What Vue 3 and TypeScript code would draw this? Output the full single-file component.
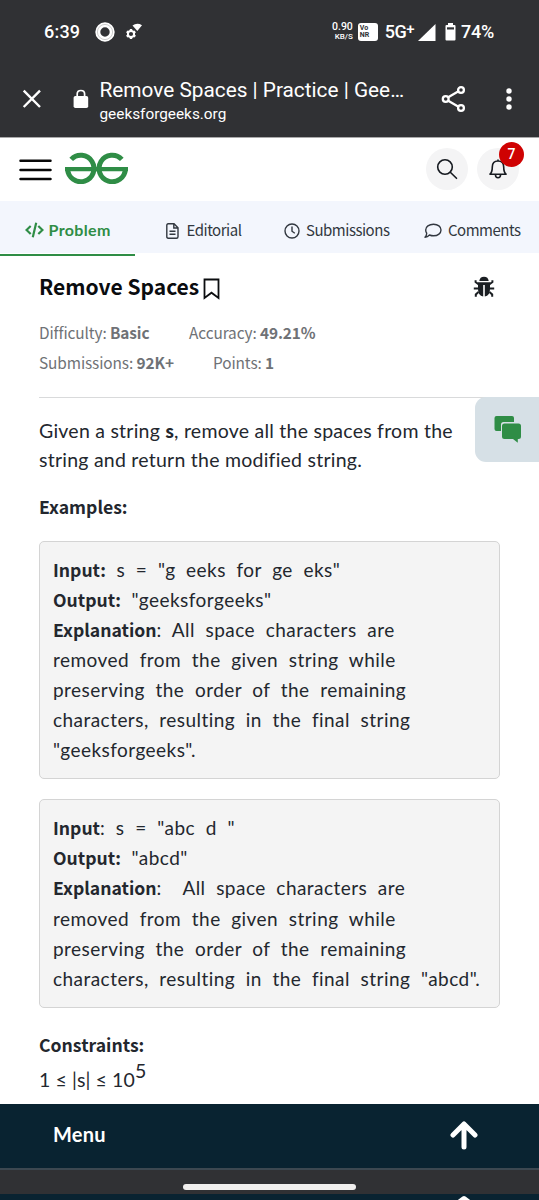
<script setup lang="ts">
interface Example {
  inputColonBold: boolean
  input: string
  output: string
  lead: string
  lines: string[]
}

const examples: Example[] = [
  {
    inputColonBold: true,
    input: 's = "g eeks for ge eks"',
    output: '"geeksforgeeks"',
    lead: ' All space characters are',
    lines: [
      'removed from the given string while',
      'preserving the order of the remaining',
      'characters, resulting in the final string',
      '"geeksforgeeks".',
    ],
  },
  {
    inputColonBold: false,
    input: 's = "abc d "',
    output: '"abcd"',
    lead: '  All space characters are',
    lines: [
      'removed from the given string while',
      'preserving the order of the remaining',
      'characters, resulting in the final string "abcd".',
    ],
  },
]
</script>

<template>
  <div class="screen">
    <header class="chrome">
      <div class="status">
        <span class="time">6:39</span>
        <svg class="ring" width="20" height="20" viewBox="0 0 20 20">
          <circle cx="10" cy="10" r="7.2" fill="none" stroke="#fff" stroke-width="5" />
          <circle cx="10" cy="10" r="7.6" fill="none" stroke="#aaa" stroke-width=".6" />
        </svg>
        <svg class="gear" width="18" height="18" viewBox="0 0 18 18">
          <circle cx="6" cy="11" r="3.1" fill="none" stroke="#fff" stroke-width="2" />
          <g stroke="#fff" stroke-width="2.4">
            <path d="M6 6V8M6 14V16M1.7 8.5L3.4 9.5M8.6 12.5L10.3 13.5M1.7 13.5L3.4 12.5M8.6 9.5L10.3 8.5" />
          </g>
          <path d="M7.5 2.5Q12 -.8 17 2.2L12.3 8Z" fill="#fff" />
        </svg>
        <span class="grow"></span>
        <span class="rate"><span>0.90</span><span class="unit">KB/S</span></span>
        <span class="vonr"><span>Vo</span><span>NR</span></span>
        <span class="net">5G<span class="plus">+</span></span>
        <svg class="signal" width="18" height="17" viewBox="0 0 18 17"><path d="M17.5 0V17H0Z" fill="#fff" /></svg>
        <svg class="battery" width="11" height="18" viewBox="0 0 11 18">
          <path d="M3 0H8V2H9.500Q10.500 2 10.500 3V16.500Q10.500 17.500 9.500 17.500H1.500Q.5 17.500 .5 16.500V3Q.5 2 1.500 2H3Z" fill="#fff" />
          <path d="M2 4.300H9V6.500H2Z" fill="#303134" />
        </svg>
        <span class="pct">74%</span>
      </div>
      <div class="address">
        <svg class="close" width="20" height="20" viewBox="0 0 20 20"><path d="M1.700 1.700L18 18M18 1.700L1.700 18" stroke="#fff" stroke-width="2.400" /></svg>
        <svg class="lock" width="16" height="20" viewBox="0 0 16 20">
          <rect x=".6" y="7" width="14.600" height="12" rx="1.800" fill="#fff" />
          <path d="M4.200 8V5Q4.200 1.500 7.900 1.500T11.600 5V8" fill="none" stroke="#fff" stroke-width="1.700" />
        </svg>
        <div class="page">
          <div class="page-title">Remove Spaces | Practice | Gee…</div>
          <div class="page-host">geeksforgeeks.org</div>
        </div>
        <svg class="share" width="26" height="28" viewBox="0 0 26 28" fill="none" stroke="#fff" stroke-width="2.300">
          <path d="M6.800 12.500L17.500 6.300M6.800 15.500L17.500 21.700" />
          <circle cx="4.700" cy="14" r="2.900" /><circle cx="20" cy="5" r="2.900" /><circle cx="20" cy="23" r="2.900" />
        </svg>
        <svg class="dots" width="6" height="24" viewBox="0 0 6 24" fill="#fff"><circle cx="3" cy="4" r="2.700" /><circle cx="3" cy="12" r="2.700" /><circle cx="3" cy="20" r="2.700" /></svg>
      </div>
    </header>

    <nav class="topbar">
      <svg class="burger" width="34" height="24" viewBox="0 0 34 24"><path d="M1.500 2.700H31.500M1.500 12H31.500M1.500 20.900H31.500" stroke="#080808" stroke-width="2.500" stroke-linecap="round" /></svg>
      <svg class="logo" width="63" height="32" viewBox="0 0 63 32" fill="none" stroke="#2f8d46">
        <path d="M6.200 7.400A13.200 13.200 0 1 1 2.600 17M56.800 7.400A13.200 13.200 0 1 0 60.400 17" stroke-width="5" />
        <path d="M0 17.100H63" stroke-width="4.400" />
      </svg>
      <span class="grow"></span>
      <span class="round">
        <svg width="22" height="22" viewBox="0 0 22 22" fill="none" stroke="#161a20" stroke-width="1.600"><circle cx="9" cy="9" r="7.300" /><path d="M14.300 14.300L20.500 20.300" stroke-linecap="round" /></svg>
      </span>
      <span class="round bell">
        <svg width="18" height="22" viewBox="0 0 18 22" fill="none" stroke="#161a20" stroke-width="1.600" stroke-linejoin="round">
          <path d="M1 16.200C3 14.500 3.300 13 3.300 9C3.300 5 5.500 3 9 3S14.700 5 14.700 9C14.700 13 15 14.500 17 16.200ZM9 3V1.500M6.400 16.500Q6.500 19.800 9 19.800T11.600 16.500" />
        </svg>
        <span class="badge">7</span>
      </span>
    </nav>

    <div class="tabs">
      <div class="tab active">
        <svg width="19" height="16" viewBox="0 0 19 16" fill="none" stroke="#2f8d46" stroke-width="2.200"><path d="M5.700 4L1.500 8L5.700 12M13.300 4L17.500 8L13.300 12M11.200 .8L7.800 15.200" /></svg>
        <span>Problem</span>
      </div>
      <div class="tab editorial">
        <svg width="13" height="16" viewBox="0 0 13 16" fill="none" stroke="#323840" stroke-width="1.400"><path d="M2.200 .8H8L12 4.800V13.700Q12 15.200 10.500 15.200H2.200Q.8 15.200 .8 13.700V2.300Q.8 .8 2.200 .8ZM7.800 .8V5H12M3.500 8.200H9.500M3.500 11.300H9.500" /></svg>
        <span>Editorial</span>
      </div>
      <div class="tab submissions">
        <svg width="16" height="16" viewBox="0 0 16 16" fill="none" stroke="#323840" stroke-width="1.400"><circle cx="8" cy="8" r="7" /><path d="M8 3.500V8.200L10.800 10.300" /></svg>
        <span>Submissions</span>
      </div>
      <div class="tab comments">
        <svg width="18" height="16" viewBox="0 0 18 16" fill="none" stroke="#323840" stroke-width="1.400" stroke-linejoin="round"><path d="M9.500 1.200C14 1.200 17 3.800 17 7S14 12.800 9.500 12.800Q7.500 12.800 5.500 12Q3.500 14.200 1 14.300Q2.700 12.500 2.700 10.200Q1.700 8.800 1.700 7C1.700 3.800 5 1.200 9.500 1.200Z" /></svg>
        <span>Comments</span>
      </div>
    </div>

    <main class="content">
      <div class="title-row">
        <h1>Remove Spaces</h1>
        <svg class="bookmark" width="17" height="22" viewBox="0 0 17 22"><path d="M1.500 1.500H15.500V20L8.500 14.700L1.500 20Z" fill="none" stroke="#0b0d0f" stroke-width="1.800" /></svg>
        <span class="grow"></span>
        <svg class="bug" width="22" height="22" viewBox="0 0 22 22">
          <path d="M6.300 5.100Q6.800 .7 11 .7T15.700 5.100Z" fill="#1b1f23" />
          <path d="M5 6.300H17V13Q17 19.800 11.800 20.500V9H10.200V20.500Q5 19.800 5 13Z" fill="#1b1f23" />
          <path d="M5.500 8.300L2.600 6V4.300M5 12.500H.8M5.500 16L2.800 18.500V20.800M16.500 8.300L19.400 6V4.300M17 12.500H21.200M16.500 16L19.200 18.500V20.800" stroke="#1b1f23" stroke-width="2" fill="none" />
        </svg>
      </div>
      <div class="stats">
        <span class="difficulty">Difficulty: <b>Basic</b></span><span class="accuracy">Accuracy: <b>49.21%</b></span>
      </div>
      <div class="stats second">
        <span class="subs">Submissions: <b>92K+</b></span><span class="points">Points: <b>1</b></span>
      </div>
      <hr />
      <p class="lead">Given a string <b>s</b>, remove all the spaces from the<br />string and return the modified string.</p>
      <h2>Examples:</h2>
      <div v-for="(ex, i) in examples" :key="i" class="example">
        <div class="line"><b>Input<template v-if="ex.inputColonBold">:</template></b><template v-if="!ex.inputColonBold">:</template> {{ ex.input }}</div>
        <div class="line"><b>Output:</b> {{ ex.output }}</div>
        <div class="line"><b>Explanation</b>:{{ ex.lead }}</div>
        <div v-for="line in ex.lines" :key="line" class="line">{{ line }}</div>
      </div>
      <h2 class="constraints">Constraints:</h2>
      <p class="formula">1 ≤ |s| ≤ 10<span class="power">5</span></p>
      <div class="feedback">
        <svg width="28" height="27" viewBox="0 0 28 27" fill="#2f8d46">
          <path d="M2.500 0H18Q20 0 20 2V6H9.500Q7 6 7 8.500V15H2.500Q.5 15 .5 13V2Q.5 0 2.500 0Z" />
          <path d="M10.500 7.500H24.500Q27 7.500 27 10V20.500Q27 23 24.500 23H23.800V26.800L19 23H10.500Q8 23 8 20.500V10Q8 7.500 10.500 7.500Z" />
        </svg>
      </div>
    </main>

    <footer class="menu">
      <span>Menu</span>
      <svg width="28" height="30" viewBox="0 0 28 30"><path d="M14 27V4M3 15L14 4L25 15" fill="none" stroke="#fff" stroke-width="5" stroke-linecap="round" stroke-linejoin="round" /></svg>
    </footer>
    <div class="gesture"><span></span></div>
    <div class="under"><svg width="28" height="5" viewBox="0 0 28 5"><path d="M8 8L14 3.500L20 8" fill="none" stroke="#fff" stroke-width="5" stroke-linejoin="round" /></svg></div>
  </div>
</template>

<style>
body { margin: 0; background: #fff; }
</style>

<style scoped>
* { box-sizing: border-box; }
.screen { width: 539px; height: 1200px; overflow: hidden; display: flex; flex-direction: column; background: #fff; color: #23272e; font-family: Lato, "Noto Sans", sans-serif; white-space: nowrap; }
svg { display: block; flex: none; }
.grow { flex: 1; }
.chrome { height: 138px; flex: none; background: #303134; border-bottom: 1px solid #a9a9aa; color: #fff; font-family: Roboto, sans-serif; }
.status { height: 63px; display: flex; align-items: center; padding: 1px 45px 0 44px; }
.time { font-size: 18px; line-height: 22px; letter-spacing: .2px; font-weight: 500; }
.ring { margin-left: 15px; }
.gear { margin-left: 10px; }
.rate { display: flex; flex-direction: column; align-items: flex-end; font-size: 10.500px; line-height: 10px; font-weight: 500; }
.rate .unit { font-size: 8px; }
.vonr { width: 20px; height: 18px; margin: 0 7px 0 5px; padding: 2px 0 0 2px; border-radius: 3px; background: #fff; color: #303134; font-size: 7px; line-height: 7px; font-weight: 700; display: flex; flex-direction: column; }
.net { font-size: 18px; line-height: 22px; display: flex; font-weight: 500; letter-spacing: -.6px; }
.plus { font-size: 15px; line-height: 16px; }
.signal { margin-left: 4px; }
.battery { margin: 0 5px 0 9px; }
.pct { font-size: 18px; line-height: 22px; font-weight: 500; letter-spacing: -.2px; }
.address { height: 74px; display: flex; align-items: flex-start; padding-left: 22px; }
.close { margin-top: 26px; }
.lock { margin: 26px 0 0 31px; }
.page { width: 343px; margin: 14px 0 0 10.500px; }
.page-title { font-size: 20.800px; line-height: 26px; }
.page-host { font-size: 15.350px; line-height: 22px; }
.share { margin: 22px 0 0 -1.500px; }
.dots { margin: 24px 0 0 39px; }
.topbar { height: 63px; flex: none; display: flex; align-items: center; padding: 0 20px 0 19px; }
.burger { margin-top: 1px; }
.logo { margin: -3px 0 0 12px; }
.round { width: 42px; height: 42px; margin-top: -1px; border-radius: 50%; background: #f4f4f5; display: flex; align-items: center; justify-content: center; }
.bell { margin-left: 9px; position: relative; }
.badge { position: absolute; left: 22px; top: -6px; width: 25px; height: 25px; border-radius: 50%; background: #cf0202; color: #fff; font: 500 14px/25px Roboto, sans-serif; text-align: center; }
.tabs { height: 55px; flex: none; display: flex; background: linear-gradient(#f3f6fd 52px, #fff 52px); font: 15px/24px "Noto Sans CJK SC", sans-serif; color: #323840; letter-spacing: -.48px; }
.tab { display: flex; flex: none; align-items: center; height: 59px; }
.tab span { margin-top: -2px; }
.tab.active { width: 135px; height: 55px; padding: 4px 0 0 24.500px; border-bottom: 2px solid #2f8d46; color: #2f8d46; font: 700 16px/24px Lato, sans-serif; }
.tab.active span { margin: 0 0 0 5px; letter-spacing: .35px; }
.editorial { margin-left: 30.500px; }
.editorial span { margin-left: 8px; }
.submissions { width: 105px; margin-left: 43px; }
.submissions span { margin-left: 5.500px; }
.comments { margin-left: 35px; }
.comments span { margin-left: 5.500px; }
.content { position: relative; flex: none; height: 848px; padding: 18px 39px 0; }
.title-row { display: flex; height: 28px; align-items: center; padding-right: 5.500px; }
h1, h2 { margin: 0; font-family: "Noto Sans CJK SC", sans-serif; font-weight: 700; }
h1 { font-size: 21px; line-height: 28px; margin-top: -4px; color: #0a0c0f; }
.bookmark { margin: 2px 0 0 4px; }
.bug { margin-top: -2px; }
.stats { margin-top: 15px; height: 30px; display: flex; align-items: center; font: 15.400px/30px "Noto Sans CJK SC", sans-serif; letter-spacing: -.1px; color: #6f7276; }
.second { margin-top: 0; }
.stats > span:first-child { width: 150px; }
.stats > .subs:first-child { width: 174px; }
hr { height: 1px; border: 0; margin: 20px 0 0; background: #d9dadb; }
.lead { margin: 19px 0 0; font-size: 19.500px; line-height: 28.800px; letter-spacing: .24px; }
b { font-family: "Noto Sans CJK SC", sans-serif; font-weight: 700; line-height: 1; }
.lead b, .line b { font-size: 17.600px; letter-spacing: 0; }
h2 { font-size: 17.600px; line-height: 28px; margin-top: 18px; }
.example { width: 461px; margin-top: 20px; padding: 13px; border: 1px solid #d4d4d4; border-radius: 5px; background: #f4f4f4; font-size: 19px; line-height: 30.100px; letter-spacing: .46px; word-spacing: 5.300px; }
.line { height: 30.100px; white-space: pre; }
.constraints { margin-top: 23px; }
.formula { margin: 6px 0 0; font-size: 19.500px; line-height: 30px; letter-spacing: .1px; display: flex; align-items: center; }
.power { margin-top: -17px; }
.feedback { position: absolute; right: 0; top: 141px; width: 64.500px; height: 65px; border-radius: 11px 0 0 11px; background: #d6e0e6; padding: 19px 0 0 19px; }
.menu { height: 64px; flex: none; background: #092331; color: #fff; display: flex; align-items: center; justify-content: space-between; padding: 0 61px 3px 53px; font-weight: 700; font-size: 20px; letter-spacing: .2px; }
.menu span { margin-top: -1px; }
.gesture { height: 26px; flex: none; background: #303134; border-top: 2px solid #3c4851; padding: 14px 0 0 183px; }
.gesture span { display: block; width: 173px; height: 6px; border-radius: 3px; background: #f0efee; }
.under { height: 6px; flex: none; background: #092331; padding: 1px 0 0 450px; }
</style>
